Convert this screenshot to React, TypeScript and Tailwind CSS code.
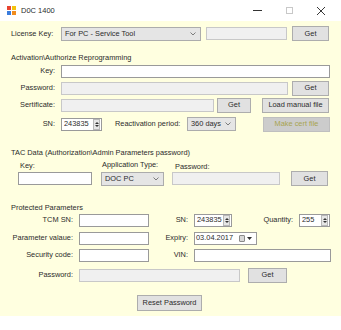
import type { ReactNode } from 'react';

function Box({ w, disabled, children }: { w: number; disabled?: boolean; children?: ReactNode }) {
  return (
    <div
      className={`h-[13px] shrink-0 border flex items-center px-[2px] ${
        disabled ? 'bg-[#f0f0f0] border-[#c8c8c8]' : 'bg-white border-[#9a9a9a]'
      }`}
      style={{ width: w }}
    >
      {children}
    </div>
  );
}

function Btn({ w, h = 15, disabled, children }: { w: number; h?: number; disabled?: boolean; children: ReactNode }) {
  return (
    <div
      className={`shrink-0 flex items-center justify-center border ${
        disabled ? 'bg-[#cccccc] border-[#bfbfbf] text-[#a8a452]' : 'bg-[#e1e1e1] border-[#adadad]'
      }`}
      style={{ width: w, height: h }}
    >
      {children}
    </div>
  );
}

function Chevron() {
  return (
    <svg width="6" height="4" viewBox="0 0 6 4" className="shrink-0">
      <path d="M0.5 0.5 L3 3 L5.5 0.5" fill="none" stroke="#606060" strokeWidth="0.8" />
    </svg>
  );
}

function Combo({ w, children }: { w: number; children: ReactNode }) {
  return (
    <div
      className="h-[14px] shrink-0 flex items-center justify-between pl-[3px] pr-[4px] bg-[#e5e5e5] border border-[#acacac]"
      style={{ width: w }}
    >
      <span>{children}</span>
      <Chevron />
    </div>
  );
}

function Spin({ w, value }: { w: number; value: string }) {
  return (
    <div className="h-[13px] shrink-0 flex items-center bg-white border border-[#9a9a9a]" style={{ width: w }}>
      <span className="flex-1 pl-[2px]">{value}</span>
      <div className="w-[7px] h-[11px] mr-[1px] flex flex-col items-center justify-center gap-[1px] bg-[#e6e6e6] border border-[#b8b8b8]">
        <svg width="4" height="2" viewBox="0 0 4 2"><path d="M0 2 L2 0 L4 2Z" fill="#333" /></svg>
        <svg width="4" height="2" viewBox="0 0 4 2"><path d="M0 0 L2 2 L4 0Z" fill="#333" /></svg>
      </div>
    </div>
  );
}

function Lbl({ w, children }: { w: number; children: ReactNode }) {
  return (
    <div className="shrink-0 text-right" style={{ width: w }}>
      {children}
    </div>
  );
}

export default function App() {
  return (
    <div className="w-[341px] h-[330px] bg-white text-[#2b2b2b] text-[7.4px] leading-none font-['Liberation_Sans',Arial,sans-serif]">
      {/* Title bar */}
      <div className="h-[21px] flex items-center">
        <svg width="9" height="9" viewBox="0 0 9 9" className="ml-[7px]">
          <rect x="0" y="0" width="4" height="4" fill="#e8432f" />
          <rect x="5" y="0" width="4" height="4" fill="#f4c20d" />
          <rect x="0" y="5" width="4" height="4" fill="#3b7ddd" />
          <rect x="5" y="5" width="4" height="4" fill="#f08c1e" />
        </svg>
        <span className="ml-[5px] text-[7.5px]">D0C 1400</span>
        <div className="ml-auto flex items-center">
          <div className="w-[9px] h-[1px] bg-[#333]" />
          <div className="ml-[24px] w-[7px] h-[7px] border border-[#c8c8c8]" />
          <svg width="10" height="10" viewBox="0 0 10 10" className="ml-[23px] mr-[15px]">
            <path d="M1 1 L9 9 M9 1 L1 9" stroke="#222" strokeWidth="0.9" />
          </svg>
        </div>
      </div>

      {/* Form body */}
      <div className="h-[295px] bg-[#ffffe0] flex flex-col pl-[11px]">
        <div className="mt-[5px] h-[15px] flex items-center">
          <span className="w-[50px] shrink-0">License Key:</span>
          <Combo w={140}>For PC - Service Tool</Combo>
          <div className="ml-[5px]">
            <Box w={81} disabled />
          </div>
          <div className="ml-[5px]">
            <Btn w={37}>Get</Btn>
          </div>
        </div>

        {/* Activation */}
        <div className="mt-[11px] h-[12px] flex items-center">Activation\Authorize Reprogramming</div>
        <div className="h-[14px] flex items-center">
          <Lbl w={44}>Key:</Lbl>
          <div className="ml-[6px]">
            <Box w={269} />
          </div>
        </div>
        <div className="mt-[3px] h-[14px] flex items-center">
          <Lbl w={44}>Password:</Lbl>
          <div className="ml-[6px]">
            <Box w={227} disabled />
          </div>
          <div className="ml-[4px]">
            <Btn w={37}>Get</Btn>
          </div>
        </div>
        <div className="mt-[3px] h-[14px] flex items-center">
          <Lbl w={44}>Sertificate:</Lbl>
          <div className="ml-[6px]">
            <Box w={153} disabled />
          </div>
          <div className="ml-[3px]">
            <Btn w={34}>Get</Btn>
          </div>
          <div className="ml-[11px]">
            <Btn w={67}>Load manual file</Btn>
          </div>
        </div>
        <div className="mt-[5px] h-[14px] flex items-center">
          <Lbl w={44}>SN:</Lbl>
          <div className="ml-[6px]">
            <Spin w={41} value="243835" />
          </div>
          <span className="ml-[13px] w-[72px] shrink-0">Reactivation period:</span>
          <Combo w={49}>360 days</Combo>
          <div className="ml-[27px]">
            <Btn w={67} disabled>
              Make cert file
            </Btn>
          </div>
        </div>

        {/* TAC data */}
        <div className="mt-[16px] h-[11px] flex items-center">TAC Data (Authorization\Admin Parameters password)</div>
        <div className="h-[12px] flex items-end">
          <span className="ml-[9px] w-[82px] shrink-0 pb-[1px]">Key:</span>
          <span className="w-[73px] shrink-0 mb-[2px]">Application Type:</span>
          <span>Password:</span>
        </div>
        <div className="mt-[1px] h-[15px] flex items-center">
          <div className="ml-[7px]">
            <Box w={74} />
          </div>
          <div className="ml-[9px]">
            <Combo w={63}>DOC PC</Combo>
          </div>
          <div className="ml-[8px]">
            <Box w={108} disabled />
          </div>
          <div className="ml-[11px]">
            <Btn w={37}>Get</Btn>
          </div>
        </div>

        {/* Protected parameters */}
        <div className="mt-[16px] h-[11px] flex items-center">Protected Parameters</div>
        <div className="h-[14px] flex items-center">
          <Lbl w={62}>TCM SN:</Lbl>
          <div className="ml-[6px]">
            <Box w={70} />
          </div>
          <Lbl w={39}>SN:</Lbl>
          <div className="ml-[6px]">
            <Spin w={38} value="243835" />
          </div>
          <Lbl w={61}>Quantity:</Lbl>
          <div className="ml-[6px]">
            <Spin w={31} value="255" />
          </div>
        </div>
        <div className="mt-[4px] h-[14px] flex items-center">
          <Lbl w={62}>Parameter valaue:</Lbl>
          <div className="ml-[6px]">
            <Box w={70} />
          </div>
          <Lbl w={39}>Expiry:</Lbl>
          <div className="ml-[6px] h-[13px] w-[63px] flex items-center bg-white border border-[#9a9a9a]">
            <span className="pl-[1px]">03.04.2017</span>
            <div className="ml-[6px] w-[6px] h-[7px] bg-[#d9d9d9] border border-[#8a8a8a] rounded-[1px]" />
            <svg width="5" height="3" viewBox="0 0 5 3" className="ml-[2px]">
              <path d="M0 0 L2.5 3 L5 0Z" fill="#333" />
            </svg>
          </div>
        </div>
        <div className="mt-[3px] h-[14px] flex items-center">
          <Lbl w={62}>Security code:</Lbl>
          <div className="ml-[6px]">
            <Box w={70} />
          </div>
          <Lbl w={39}>VIN:</Lbl>
          <div className="ml-[6px]">
            <Box w={137} />
          </div>
        </div>
        <div className="mt-[5px] h-[16px] flex items-center">
          <Lbl w={62}>Password:</Lbl>
          <div className="ml-[6px]">
            <Box w={161} disabled />
          </div>
          <div className="ml-[8px]">
            <Btn w={39}>Get</Btn>
          </div>
        </div>
        <div className="mt-[11px] h-[17px] flex items-center">
          <div className="ml-[126px]">
            <Btn w={65} h={16}>
              Reset Password
            </Btn>
          </div>
        </div>
      </div>
    </div>
  );
}
